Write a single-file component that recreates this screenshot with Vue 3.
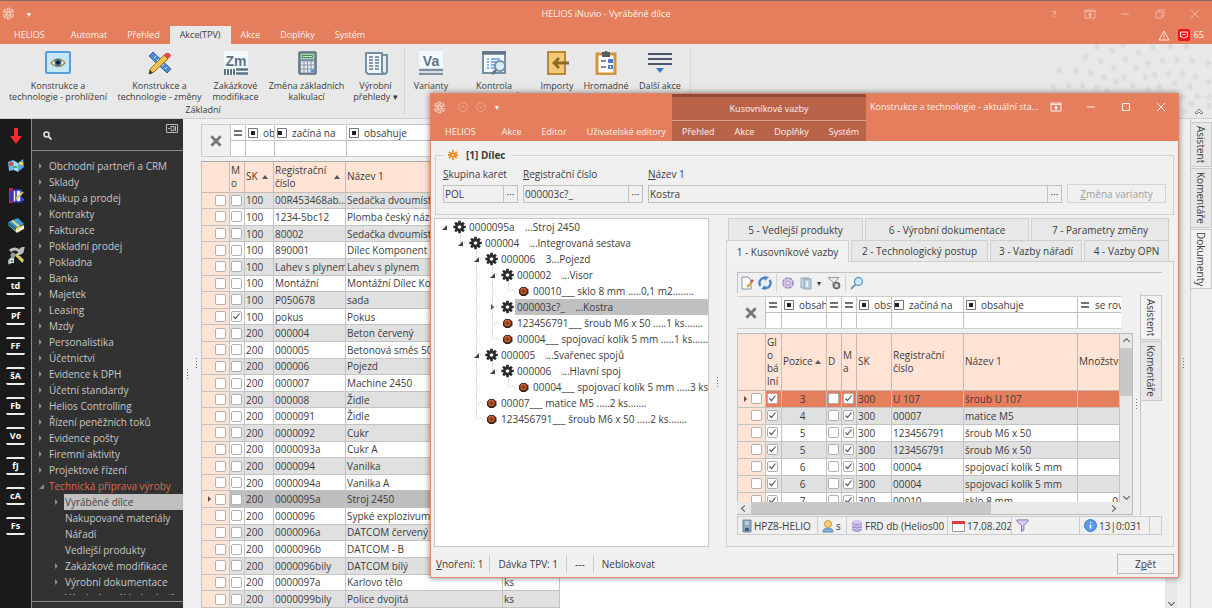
<script setup>
import { ref } from "vue";

const mainTabs = ["HELIOS", "Automat", "Přehled", "Akce(TPV)", "Akce", "Doplňky", "Systém"];

const basicActions = [
  { icon: "eye", label: "Konstrukce a\ntechnologie - prohlížení", size: "w108" },
  { icon: "pencil", label: "Konstrukce a\ntechnologie - změny", size: "w95" },
  { icon: "zm", letters: "Zm", label: "Zakázkové\nmodifikace", size: "w57" },
  { icon: "calc", label: "Změna základních\nkalkulací", size: "w85" },
  { icon: "papers", label: "Výrobní\npřehledy", size: "w53", menu: true },
];

const moreActions = [
  { icon: "va", letters: "Va", label: "Varianty", size: "w44" },
  { icon: "check", label: "Kontrola\nduplicit dílců", size: "w80" },
  { icon: "import", label: "Importy", size: "w46" },
  { icon: "clipboard", label: "Hromadné\nakce", size: "w52" },
  { icon: "more", label: "Další akce\n(TPV)", size: "w56" },
];

const flakes = [
  [866, 140], [914, 152], [946, 135], [991, 157], [1035, 143], [1087, 138], [1135, 138],
  [833, 170], [879, 184], [952, 178], [1021, 190], [1063, 181], [1107, 179], [1153, 182],
  [1200, 190], [754, 211], [803, 211], [848, 220], [917, 203], [985, 203], [1041, 225],
  [1083, 221], [1124, 221], [1163, 229], [887, 231], [949, 233], [1012, 233], [736, 260],
  [782, 257], [824, 256], [866, 262], [924, 246], [974, 257], [1055, 261], [1100, 250],
  [1146, 260], [1203, 245], [898, 272], [1020, 268], [1125, 290], [1168, 290], [1203, 290],
  [1128, 335], [1150, 312], [1203, 318],
];

const railPictures = ["r-arrow", "r-map", "r-book", "r-stack", "r-tools"];
const railCodes = ["td", "Pf", "FF", "šA", "Fb", "Vo", "fJ", "cA", "Fs"];

const menu = [
  "Obchodní partneři a CRM", "Sklady", "Nákup a prodej", "Kontrakty", "Fakturace",
  "Pokladní prodej", "Pokladna", "Banka", "Majetek", "Leasing", "Mzdy", "Personalistika",
  "Účetnictví", "Evidence k DPH", "Účetní standardy", "Helios Controlling",
  "Řízení peněžních toků", "Evidence pošty", "Firemní aktivity", "Projektové řízení",
];
const submenu = [
  { text: "Vyráběné dílce", more: true, active: true },
  { text: "Nakupované materiály" },
  { text: "Nářadí" },
  { text: "Vedlejší produkty" },
  { text: "Zakázkové modifikace", more: true },
  { text: "Výrobní dokumentace", more: true },
  { text: "Výrobní a nákladové stř." },
];

const partFilters = [
  { op: "eq", text: "" },
  { op: "contains", text: "obsahuje" },
  { op: "begins", text: "začíná na" },
  { op: "contains", text: "obsahuje" },
];

const parts = ref(
  [
    ["100", "00R453468ab...", "Sedačka dvoumístná"],
    ["100", "1234-5bc12", "Plomba český název"],
    ["100", "80002", "Sedačka dvoumístná"],
    ["100", "890001", "Dílec Komponent 1"],
    ["100", "Lahev s plynem", "Lahev s plynem"],
    ["100", "Montážní", "Montážní Dílec Komp"],
    ["100", "P050678", "sada"],
    ["100", "pokus", "Pokus"],
    ["200", "000004", "Beton červený"],
    ["200", "000005", "Betonová směs 50"],
    ["200", "000006", "Pojezd"],
    ["200", "000007", "Machine 2450"],
    ["200", "000008", "Židle"],
    ["200", "0000091", "Židle"],
    ["200", "0000092", "Cukr"],
    ["200", "0000093a", "Cukr A"],
    ["200", "0000094", "Vanilka"],
    ["200", "0000094a", "Vanilka A"],
    ["200", "0000095a", "Stroj 2450"],
    ["200", "0000096", "Sypké explozivum"],
    ["200", "0000096a", "DATCOM červený"],
    ["200", "0000096b", "DATCOM - B"],
    ["200", "0000096bily", "DATCOM bílý"],
    ["200", "0000097a", "Karlovo tělo", "ks"],
    ["200", "0000099bily", "Police dvojitá", "ks"],
  ].map(([sk, reg, name, unit]) => ({ sk, reg, name, unit, mark: false, mo: reg === "pokus" }))
);
const currentPart = "0000095a";

const tree = [
  { depth: 0, open: true, text: "0000095a    ...Stroj 2450" },
  { depth: 1, open: true, text: "000004    ...Integrovaná sestava" },
  { depth: 2, open: true, text: "000006    3...Pojezd" },
  { depth: 3, open: true, text: "000002    ...Visor" },
  { depth: 4, leaf: true, text: "00010___ sklo 8 mm .....0,1 m2........" },
  { depth: 3, open: false, text: "000003c?_    ...Kostra", selected: true },
  { depth: 3, leaf: true, text: "123456791___ šroub M6 x 50 .....1 ks......." },
  { depth: 3, leaf: true, text: "00004___ spojovací kolík 5 mm .....1 ks......" },
  { depth: 2, open: true, text: "000005    ...Svařenec spojů" },
  { depth: 3, open: true, text: "000006    ...Hlavní spoj" },
  { depth: 4, leaf: true, text: "00004___ spojovací kolík 5 mm .....3 ks...." },
  { depth: 2, leaf: true, text: "00007___ matice M5 .....2 ks......." },
  { depth: 2, leaf: true, text: "123456791___ šroub M6 x 50 .....2 ks......." },
];

// does another node follow on this level, under the same parent?
const continues = (index, level) => {
  for (let i = index + 1; i < tree.length; i++) {
    if (tree[i].depth < level) return false;
    if (tree[i].depth === level) return true;
  }
  return false;
};

const guideClass = (index, level) => {
  const own = level === tree[index].depth;
  return { elbow: own && level > 0, through: level > 0 && continues(index, level) };
};

const linkFilters = [
  { op: "eq", text: "" },
  { op: "contains", text: "obsahuje" },
  { op: "eq", text: "" },
  { op: "eq", text: "" },
  { op: "contains", text: "obsahuje" },
  { op: "begins", text: "začíná na" },
  { op: "contains", text: "obsahuje" },
  { op: "eq", text: "se rovná" },
];

const links = ref(
  [
    ["3", "U 107", "šroub U 107", ""],
    ["4", "00007", "matice M5", ""],
    ["5", "123456791", "šroub M6 x 50", ""],
    ["5", "123456791", "šroub M6 x 50", ""],
    ["6", "00004", "spojovací kolík 5 mm", ""],
    ["6", "00004", "spojovací kolík 5 mm", ""],
    ["7", "00010", "sklo 8 mm", "0"],
  ].map(([pos, reg, name, qty]) => ({ pos, reg, name, qty, mark: false, global: true, d: false, ma: true }))
);

const group = ref("POL");
const regNo = ref("000003c?_");
const partName = ref("Kostra");
</script>

<template>
  <div class="app">
    <svg class="defs" aria-hidden="true">
      <symbol id="flower" viewBox="0 0 16 16">
        <g fill="none" stroke="currentColor" stroke-width="1.2">
          <circle cx="8" cy="8" r="2" />
          <path d="M8 6 6 1.5h4zM8 10l-2 4.500h4zM6.300 7 1.500 6l2-3.500zM9.700 7l4.800-1-2-3.500zM6.300 9l-4.800 1 2 3.500zM9.700 9l4.800 1-2 3.500z" />
        </g>
      </symbol>
      <symbol id="ribbon-toggle" viewBox="0 0 12 10">
        <path d="M1 1h10v8H1zM1 2.500h10" fill="none" stroke="currentColor" />
        <path d="M6 3.500 8.500 6H7v2H5V6H3.500z" fill="currentColor" />
      </symbol>
      <symbol id="cross" viewBox="0 0 12 12">
        <path d="m2 2 8 8M10 2l-8 8" fill="none" stroke="currentColor" stroke-width="2.400" />
      </symbol>
      <symbol id="eq" viewBox="0 0 10 10"><path d="M1 3h8M1 7h8" stroke="#444" stroke-width="1.600" /></symbol>
      <symbol id="contains" viewBox="0 0 10 10">
        <path d="M.500.500h9v9h-9z" fill="#fff" stroke="#777" />
        <path d="M3 3h4v4H3z" fill="#222" />
      </symbol>
      <symbol id="begins" viewBox="0 0 10 10">
        <path d="M.500.500h9v9h-9z" fill="#fff" stroke="#777" />
        <path d="M1 3h4v4H1z" fill="#222" />
      </symbol>
      <symbol id="gear" viewBox="0 0 14 14">
        <path d="M7 .800v12.400M.800 7h12.400M2.600 2.600l8.800 8.800M11.400 2.600l-8.800 8.800" stroke="#2b2b2b" stroke-width="2.600" />
        <circle cx="7" cy="7" r="4.500" fill="#2b2b2b" /><circle cx="7" cy="7" r="1.800" fill="#fff" />
      </symbol>
      <symbol id="nut" viewBox="0 0 14 14">
        <path d="M5 3h4l3 2.500v4L9 12H5L2.500 9.500v-4z" fill="#3a2a22" />
        <circle cx="7" cy="7" r="3.300" fill="#c05a2a" /><circle cx="7" cy="7.300" r="1.200" fill="#6a3010" />
      </symbol>

      <symbol id="eye" viewBox="0 0 26 24">
        <rect x="1" y="1" width="24" height="21" rx="1" fill="#c3e7fb" stroke="#5b9bd8" stroke-width="2" />
        <path d="M6 12q7-8 14 0-7 7-14 0z" fill="#fff" stroke="#a98a45" stroke-width="1.400" />
        <circle cx="13" cy="11.500" r="3.500" fill="#2d6ca0" /><circle cx="13" cy="11.500" r="1.800" fill="#111" />
      </symbol>
      <symbol id="pencil" viewBox="0 0 26 24">
        <path d="m2 5 4-4 18 17-4 4z" fill="#4d8bd6" stroke="#3467a6" />
        <path d="m7 7 2-2M10 10l2-2M15 15l2-2M18 18l2-2" stroke="#d3e6fa" />
        <path d="m2 23 1-5L17 4l4 4L7 21z" fill="#f2c34a" stroke="#94702a" />
        <path d="m2 23 1-4 3 3z" fill="#333" /><path d="m17 4 2-2q2-1 4 1t0 3l-2 2z" fill="#e2464d" />
      </symbol>
      <symbol id="zm" viewBox="0 0 26 24">
        <path d="M1 0h24v24H1z" fill="#f3faff" />
        <path d="M2 18v6M5 18v6M8 18v6M11 18v6" stroke="#5d7284" stroke-width="2" />
        <path d="M13 18.500h12M13 22.500h12" stroke="#5d7284" stroke-width="2.600" />
      </symbol>
      <symbol id="va" viewBox="0 0 26 24">
        <path d="M1 0h24v24H1z" fill="#f3faff" />
        <path d="M1 19h24M1 23h24" stroke="#7c909f" stroke-width="2.400" />
      </symbol>
      <symbol id="calc" viewBox="0 0 26 24">
        <rect x="5" y="1" width="17" height="22" rx="1" fill="#8294a5" stroke="#5b6d7c" stroke-width="1.500" />
        <path d="M7 3h13v5H7z" fill="#a9d6ae" />
        <path d="M8.500 4.500h10v2h-10z" fill="#cdebd0" stroke="#3f8d50" />
        <path d="M7 12h13M7 16h13M7 20h13" stroke="#e3eaf2" stroke-width="3" stroke-dasharray="2.500 1" />
        <path d="M17 20h3" stroke="#5b8fd0" stroke-width="3" />
      </symbol>
      <symbol id="papers" viewBox="0 0 26 24">
        <path d="M18 4h6v17l-2 2h-4" fill="#e5eef5" stroke="#7690a3" stroke-width="2" />
        <path d="M3 2h16v19l2 2H5l-2-2z" fill="#f2f7fb" stroke="#7690a3" stroke-width="2" />
        <path d="M6 6h4M12 6h4M6 9h4M12 9h4M6 12h4M12 12h4M6 15h4M12 15h4M6 18h4M12 18h4" stroke="#5f7b90" stroke-width="1.500" />
      </symbol>
      <symbol id="check" viewBox="0 0 26 24">
        <path d="M2 1h22v21H2z" fill="#f6fbff" stroke="#7690a3" stroke-width="2" />
        <path d="M1 2h24" stroke="#617789" stroke-width="3.500" />
        <path d="M6 8h2M10 8h9M6 11h2M10 11h6M6 14h2M10 14h4M6 17h2M10 17h4" stroke="#5c9be0" stroke-width="1.400" />
        <circle cx="19" cy="15" r="5" fill="#d9effc" stroke="#7690a3" stroke-width="2" />
        <path d="m15 19-4 4" stroke="#617789" stroke-width="2.600" />
      </symbol>
      <symbol id="import" viewBox="0 0 26 24">
        <path d="M4 1h17v22H4z" fill="#f5c878" stroke="#b78935" stroke-width="2" />
        <path d="M10 12h15M15 7l-5 5 5 5" fill="none" stroke="#8b6a25" stroke-width="2.800" />
      </symbol>
      <symbol id="clipboard" viewBox="0 0 26 24">
        <path d="M4 3h18v20H4z" fill="#fff" stroke="#d0973f" stroke-width="3" />
        <path d="M9 1h2q2-2 4 0h2v5H9z" fill="#4c6072" />
        <path d="M8 10h5M8 16h5" stroke="#667" stroke-width="1.500" /><path d="M15 8h5v4h-5zM15 14h5v4h-5z" fill="#4a7ccc" />
        <path d="M17 15h1v2h-1z" fill="#fff" />
      </symbol>
      <symbol id="more" viewBox="0 0 26 24">
        <path d="M1 3h24M1 8h24M1 13h24" stroke="#4b5568" stroke-width="2" />
        <path d="M9 17h8l-4 5z" fill="#3d78c8" />
      </symbol>

      <symbol id="r-arrow" viewBox="0 0 18 18"><path d="M7 1h4v8h4l-6 8-6-8h4z" fill="#f52a2a" /></symbol>
      <symbol id="r-map" viewBox="0 0 18 18">
        <path d="m1 5 5-2 1 10-5 1z" fill="#6ab7f0" /><path d="m6 3 5 3v9l-4-2z" fill="#a6dcf8" />
        <path d="m11 6 5-4 1 8-6 5z" fill="#5aa4e8" /><circle cx="4" cy="7" r="2" fill="#e6412f" />
        <path d="M12 5h4v3h-4z" fill="#f0d638" /><path d="M7 9h3v2H7z" fill="#4bb04a" />
      </symbol>
      <symbol id="r-book" viewBox="0 0 18 18">
        <path d="M2 1h4v15H2z" fill="#c4263a" /><path d="M6 3h8v12H6z" fill="#f4f4ff" stroke="#2a32c8" stroke-width="1.500" />
        <path d="M9 3v12M4 4v10" stroke="#2531d8" stroke-width="1.500" /><path d="m9 12 7-7" stroke="#e2c63c" stroke-width="2" />
        <path d="M14 11h3v3h-3z" fill="#2a4de0" />
      </symbol>
      <symbol id="r-stack" viewBox="0 0 18 18">
        <path d="m1 7 9 9 7-4V8l-9 3z" fill="#e8d55a" /><path d="m2 8 8 6 7-4" fill="none" stroke="#fff" stroke-width="1.500" />
        <path d="m1 5 10-4 6 6-8 4z" fill="#3f9ad6" /><path d="m1 5 8 6v3L1 8z" fill="#26738f" />
        <path d="m5 3.500 7 6" stroke="#f2dd62" stroke-width="2" />
      </symbol>
      <symbol id="r-tools" viewBox="0 0 18 18">
        <path d="M3 4q5-4 9 0l4-3-1 4-5 3 6 6M3 17q-2-5 4-6" fill="none" stroke="#bcbcbc" stroke-width="3" />
        <path d="m9 8 7 7" stroke="#e7cc38" stroke-width="2" /><circle cx="6" cy="8" r="2.500" fill="#8f98a8" />
        <path d="M3 12h4v4H3z" fill="#dfe4ea" /><path d="M4 13h2v2H4z" fill="#38a04c" />
      </symbol>
      <symbol id="lens" viewBox="0 0 14 14">
        <path d="m6 8-5 5" stroke="#8594a3" stroke-width="2" />
        <circle cx="8.500" cy="5.500" r="4" fill="#c9ecfb" stroke="#6d9fc9" stroke-width="1.400" />
      </symbol>
      <symbol id="funnel" viewBox="0 0 14 14">
        <path d="M1 1h12v1.500L8.500 7v5L6 13.500V7L1 2.500z" fill="#dacdf0" stroke="#8468b5" />
      </symbol>
    </svg>

    <header class="titlebar">
      <div class="title-row">
        <div class="quick">
          <svg class="logo"><use href="#flower" /></svg>
          <span class="caret">▾</span>
        </div>
        <h1>HELIOS iNuvio - Vyráběné dílce</h1>
        <div class="window-buttons dim">
          <button aria-label="Nápověda"><b>?</b></button>
          <button aria-label="Pás karet"><svg width="12" height="10"><use href="#ribbon-toggle" /></svg></button>
          <button aria-label="Minimalizovat"><svg width="10" height="10"><path d="M1 5h8" stroke="currentColor" /></svg></button>
          <button aria-label="Obnovit">
            <svg width="10" height="10"><path d="M1 3h6v6H1zM3 3V1h6v6H7" fill="none" stroke="currentColor" /></svg>
          </button>
          <button aria-label="Zavřít"><svg width="10" height="10"><path d="m1 1 8 8M9 1 1 9" stroke="currentColor" /></svg></button>
        </div>
      </div>
      <nav class="tab-row">
        <button v-for="tab in mainTabs" :key="tab" :class="{ active: tab === 'Akce(TPV)' }">{{ tab }}</button>
        <div class="alerts">
          <svg width="12" height="11" viewBox="0 0 12 11">
            <path d="M6 1 11 10H1z" fill="none" stroke="#fbe4da" /><path d="M6 4v3M6 8v1" stroke="#fbe4da" />
          </svg>
          <svg width="12" height="12" viewBox="0 0 12 12">
            <rect width="12" height="12" rx="2" fill="#f80d12" />
            <path d="M2.500 3h7v5h-2L6 9.500 4.500 8h-2z" fill="none" stroke="#fff" /><path d="M4.500 5.500h3" stroke="#fff" />
          </svg>
          <span>65</span>
        </div>
      </nav>
    </header>

    <section class="ribbon">
      <div class="ribbon-group first">
        <div class="actions">
          <button v-for="a in basicActions" :key="a.label" :class="['action', a.size]">
            <svg class="big">
              <use :href="'#' + a.icon" />
              <text v-if="a.letters" x="13" y="15" text-anchor="middle">{{ a.letters }}</text>
            </svg>
            <span>{{ a.label }}<i v-if="a.menu"> ▾</i></span>
          </button>
        </div>
        <div class="group-name">Základní</div>
      </div>
      <div class="ribbon-group">
        <div class="actions">
          <button v-for="a in moreActions" :key="a.label" :class="['action', a.size]">
            <svg class="big">
              <use :href="'#' + a.icon" />
              <text v-if="a.letters" x="13" y="15" text-anchor="middle">{{ a.letters }}</text>
            </svg>
            <span>{{ a.label }}</span>
          </button>
        </div>
      </div>
      <svg class="flakes" viewBox="720 132 492 228">
        <path
          v-for="([x, y], i) in flakes"
          :key="i"
          :d="`M${x - 10} ${y}h20M${x - 5} ${y - 10}l10 20M${x + 5} ${y - 10}l-10 20`"
          stroke="#dadada"
          stroke-width="4"
        />
      </svg>
      <svg class="collapse" viewBox="0 0 10 8">
        <path d="M1 6 5 2l4 4M3 7l2-2 2 2M1 6l2 1M9 6 7 7" fill="none" stroke="#777" />
      </svg>
    </section>

    <div class="body">
      <aside class="rail">
        <button v-for="p in railPictures" :key="p" :aria-label="p">
          <svg width="18" height="18"><use :href="'#' + p" /></svg>
        </button>
        <button v-for="c in railCodes" :key="c"><span class="code">{{ c }}</span></button>
      </aside>

      <aside class="sidebar">
        <div class="search">
          <svg width="9" height="9" viewBox="0 0 9 9">
            <circle cx="3.500" cy="3.500" r="2.500" fill="none" stroke="#ddd" stroke-width="1.600" />
            <path d="m5.500 5.500 3 3" stroke="#ddd" stroke-width="1.800" />
          </svg>
          <svg class="pin" width="12" height="9" viewBox="0 0 12 9">
            <path d="M.500.500h11v8H.500z" fill="none" stroke="#bbb" /><path d="M5 2.500h3v4H5zM2 4.500h2M9.500 2v5" fill="none" stroke="#bbb" />
          </svg>
        </div>
        <ul class="menu">
          <li v-for="m in menu" :key="m"><i class="tri"></i><a href="#">{{ m }}</a></li>
          <li class="opened"><i class="tri open"></i><a href="#">Technická příprava výroby</a></li>
          <li v-for="s in submenu" :key="s.text" :class="['sub', { active: s.active }]">
            <i :class="s.more ? 'tri' : 'no-tri'"></i><a href="#">{{ s.text }}</a>
          </li>
        </ul>
        <div class="sidebar-foot"></div>
      </aside>

      <div class="gutter low"><i class="dots"></i></div>
      <div class="gutter"><i class="dots"></i></div>

      <main class="parts">
        <div class="filters parts-cols">
          <button class="clear" aria-label="Zrušit filtr"><svg width="14" height="14"><use href="#cross" /></svg></button>
          <div v-for="(f, i) in partFilters" :key="i" class="filter">
            <button><svg width="10" height="10"><use :href="'#' + f.op" /></svg><span>{{ f.text }}</span></button>
            <input type="text" :aria-label="'Filtr ' + (i + 1)" />
          </div>
        </div>
        <div class="sheet">
          <table class="grid parts-grid">
            <colgroup><col class="c28" /><col class="c15" /><col class="c29" /><col class="c72" /><col class="c157" /><col class="c57" /></colgroup>
            <thead>
              <tr>
                <th></th>
                <th>{{ "M\no" }}</th>
                <th><div class="sorted">SK<i class="up"></i></div></th>
                <th><div class="sorted">{{ "Registrační\nčíslo" }}<i class="up"></i></div></th>
                <th>Název 1</th>
                <th></th>
              </tr>
            </thead>
            <tbody>
              <tr v-for="p in parts" :key="p.reg" :class="{ current: p.reg === currentPart }">
                <td class="mark"><div><i class="tri"></i><input v-model="p.mark" type="checkbox" aria-label="Označit" /></div></td>
                <td class="tick"><input v-model="p.mo" type="checkbox" aria-label="Mo" /></td>
                <td>{{ p.sk }}</td>
                <td>{{ p.reg }}</td>
                <td>{{ p.name }}</td>
                <td>{{ p.unit }}</td>
              </tr>
            </tbody>
          </table>
          <div class="vbar"><span class="down"></span></div>
        </div>
      </main>

      <div class="gutter right"><i class="dots"></i></div>
      <nav class="side-tabs">
        <button class="h45">Asistent</button>
        <button class="h60">Komentáře</button>
        <button class="h60 active">Dokumenty</button>
      </nav>
    </div>

    <section class="dialog">
      <header class="dialog-head">
        <div class="head-left">
          <div class="quick">
            <svg class="logo"><use href="#flower" /></svg>
            <svg class="faint" width="30" height="12">
              <circle cx="5" cy="6" r="4.500" fill="none" stroke="#eda88f" /><path d="m3 7 2-2 2 2" fill="none" stroke="#eda88f" />
              <circle cx="23" cy="6" r="4.500" fill="none" stroke="#eda88f" /><path d="m21 5 2 2 2-2" fill="none" stroke="#eda88f" />
            </svg>
            <span class="caret">▾</span>
          </div>
          <nav class="tab-row">
            <button>HELIOS</button><button>Akce</button><button>Editor</button><button>Uživatelské editory</button>
          </nav>
        </div>
        <div class="context">
          <div class="context-name">Kusovníkové vazby</div>
          <nav class="tab-row">
            <button>Přehled</button><button>Akce</button><button>Doplňky</button><button>Systém</button>
          </nav>
        </div>
        <div class="head-right">
          <h2>Konstrukce a technologie - aktuální sta...</h2>
          <div class="window-buttons">
            <button aria-label="Pás karet"><svg width="12" height="10"><use href="#ribbon-toggle" /></svg></button>
            <button aria-label="Minimalizovat"><svg width="10" height="10"><path d="M1 5h8" stroke="currentColor" /></svg></button>
            <button aria-label="Maximalizovat"><svg width="10" height="10"><path d="M1.500 1.500h7v7h-7z" fill="none" stroke="currentColor" /></svg></button>
            <button aria-label="Zavřít"><svg width="10" height="10"><path d="m1 1 8 8M9 1 1 9" stroke="currentColor" /></svg></button>
          </div>
        </div>
      </header>

      <fieldset class="part">
        <legend>
          <svg width="10" height="10" viewBox="0 0 10 10">
            <path d="M5 0v10M1 2l8 6M9 2 1 8M0 5h10" stroke="#f28c1e" stroke-width="1.800" /><circle cx="5" cy="5" r="1" fill="#fff" />
          </svg>
          [1] Dílec
        </legend>
        <div class="fields">
          <div class="field w75">
            <label for="group"><u>S</u>kupina karet</label>
            <div class="lookup"><input id="group" v-model="group" type="text" /><button aria-label="Vybrat skupinu">···</button></div>
          </div>
          <div class="field w120">
            <label for="reg"><u>R</u>egistrační číslo</label>
            <div class="lookup"><input id="reg" v-model="regNo" type="text" /><button aria-label="Vybrat číslo">···</button></div>
          </div>
          <div class="field grow">
            <label for="name"><u>N</u>ázev 1</label>
            <div class="lookup"><input id="name" v-model="partName" type="text" /><button aria-label="Vybrat název">···</button></div>
          </div>
          <button class="variant" disabled><u>Z</u>měna varianty</button>
        </div>
      </fieldset>

      <div class="panes">
        <div class="tree">
          <div v-for="(n, i) in tree" :key="i" class="node">
            <span v-for="level in n.depth + 1" :key="level" :class="['guide', guideClass(i, level - 1)]">
              <i v-if="level === n.depth + 1 && !n.leaf" :class="['tri', { open: n.open }]"></i>
            </span>
            <svg width="15" height="14"><use :href="n.leaf ? '#nut' : '#gear'" /></svg>
            <span :class="['node-text', { selected: n.selected }]">{{ n.text }}</span>
          </div>
        </div>
        <div class="gutter split"><i class="dots"></i></div>

        <div class="tabs">
          <div class="tab-line">
            <button class="t135">5 - Vedlejší produkty</button>
            <button class="t164">6 - Výrobní dokumentace</button>
            <button class="grow">7 - Parametry změny</button>
          </div>
          <div class="tab-line">
            <button class="t123 active">1 - Kusovníkové vazby</button>
            <button class="t137">2 - Technologický postup</button>
            <button class="t92">3 - Vazby nářadí</button>
            <button class="grow">4 - Vazby OPN</button>
          </div>
          <div class="tab-page">
            <div class="toolbar">
              <button aria-label="Upravit">
                <svg width="14" height="14">
                  <path d="M2 1h6l3 3v9H2z" fill="#fff" stroke="#7b93a8" /><path d="m7 11 5-5" stroke="#dca545" stroke-width="2.400" /><path d="m11 6 2-2" stroke="#d8444a" stroke-width="2.400" />
                </svg>
              </button>
              <button aria-label="Obnovit">
                <svg width="14" height="14">
                  <path d="M2.500 10A5 5 0 0 1 7 2M11.500 4A5 5 0 0 1 7 12" fill="none" stroke="#4a86cc" stroke-width="2.400" /><path d="M6 0l5 1-4 4zM8 14l-5-1 4-4z" fill="#4a86cc" />
                </svg>
              </button>
              <i class="sep"></i>
              <button aria-label="Nastavení">
                <svg width="14" height="14">
                  <circle cx="7" cy="7" r="5" fill="#d9caec" stroke="#a189c6" stroke-width="1.600" stroke-dasharray="3 1" /><circle cx="7" cy="7" r="2" fill="#f4eefb" stroke="#a189c6" />
                </svg>
              </button>
              <button aria-label="Kopie">
                <svg width="14" height="14">
                  <path d="M2 2h8v10H2z" fill="#c8dcea" stroke="#8fa6b8" /><path d="M5 3h7v10H5z" fill="#b5cfe1" stroke="#8fa6b8" /><path d="M8 5v6" stroke="#e9f3fa" stroke-width="2" />
                </svg>
              </button>
              <span class="caret">▾</span>
              <button aria-label="Filtr">
                <svg width="14" height="14">
                  <path d="M1 1.500h11L8 6v6l-2-2V6z" fill="#eee" stroke="#999" /><circle cx="9.500" cy="9.500" r="3" fill="#bbb" stroke="#666" stroke-width="1.600" /><circle cx="9.500" cy="9.500" r="1" fill="#fff" />
                </svg>
              </button>
              <i class="sep"></i>
              <button aria-label="Hledat"><svg width="14" height="14"><use href="#lens" /></svg></button>
            </div>

            <div class="link-area">
              <div class="link-left">
                <div class="filters link-cols">
                  <button class="clear" aria-label="Zrušit filtr"><svg width="14" height="14"><use href="#cross" /></svg></button>
                  <div v-for="(f, i) in linkFilters" :key="i" class="filter">
                    <button><svg width="10" height="10"><use :href="'#' + f.op" /></svg><span>{{ f.text }}</span></button>
                    <input type="text" :aria-label="'Filtr vazeb ' + (i + 1)" />
                  </div>
                </div>
                <div class="link-box">
                  <div class="link-scroll">
                    <div class="link-clip">
                      <table class="grid link-grid">
                        <colgroup>
                          <col class="c28" /><col class="c16" /><col class="c45" /><col class="c15" /><col class="c15" /><col class="c35" /><col class="c72" /><col class="c114" /><col />
                        </colgroup>
                        <thead>
                          <tr>
                            <th></th>
                            <th>{{ "Gl\no\nbá\nlní" }}</th>
                            <th><div class="sorted">Pozice<i class="up"></i></div></th>
                            <th>D</th>
                            <th>{{ "M\na" }}</th>
                            <th>SK</th>
                            <th>{{ "Registrační\nčíslo" }}</th>
                            <th>Název 1</th>
                            <th>Množství</th>
                          </tr>
                        </thead>
                        <tbody>
                          <tr v-for="(l, i) in links" :key="i" :class="{ picked: i === 0 }">
                            <td class="mark"><div><i class="tri"></i><input v-model="l.mark" type="checkbox" aria-label="Označit" /></div></td>
                            <td class="tick"><input v-model="l.global" type="checkbox" aria-label="Globální" /></td>
                            <td class="pos">{{ l.pos }}</td>
                            <td class="tick"><input v-model="l.d" type="checkbox" aria-label="D" /></td>
                            <td class="tick"><input v-model="l.ma" type="checkbox" aria-label="Ma" /></td>
                            <td>300</td>
                            <td>{{ l.reg }}</td>
                            <td>{{ l.name }}</td>
                            <td class="qty">{{ l.qty }}</td>
                          </tr>
                        </tbody>
                      </table>
                    </div>
                    <div class="vbar"><span class="up-arrow"></span><i class="thumb"></i><span class="down"></span></div>
                  </div>
                  <div class="hbar"><span class="left"></span><i class="thumb"></i><span class="right-arrow"></span></div>
                </div>
              </div>
              <div class="gutter narrow"><i class="dots"></i></div>
              <nav class="side-tabs inner">
                <button class="h45 active">Asistent</button>
                <button class="h60">Komentáře</button>
              </nav>
            </div>

            <div class="status">
              <span class="s80">
                <svg width="10" height="14"><path d="M1 1h8v12H1z" fill="#8fa9c0" stroke="#6c8499" /><path d="M3 3h4M3 5h4" stroke="#eef" /><path d="M3 9h4v3H3z" fill="#3c5c7c" /></svg>HPZ8-HELIO
              </span>
              <span class="s29">
                <svg width="12" height="14"><path d="M1 13q0-4 5-4t5 4z" fill="#7fb0de" stroke="#5e8ab5" /><circle cx="6" cy="5" r="3.500" fill="#f6d27a" stroke="#c79a3c" /></svg>s
              </span>
              <span class="s101">
                <svg width="12" height="14"><path d="M1 3v8q5 4 10 0V3z" fill="#a893cc" /><ellipse cx="6" cy="3" rx="5" ry="2" fill="#d5c8ea" /><path d="M1 6q5 3 10 0M1 9q5 3 10 0" fill="none" stroke="#e2d8f2" /></svg>FRD db (Helios00
              </span>
              <span class="s64">
                <svg width="13" height="12"><path d="M.500 1.500h12v10H.500z" fill="#fff" stroke="#999" /><path d="M0 1h13v3H0z" fill="#e0393c" /></svg>17.08.202
              </span>
              <span class="grow"><svg width="13" height="13"><use href="#funnel" /></svg></span>
              <span class="s70">
                <svg width="13" height="13"><circle cx="6.500" cy="6.500" r="6" fill="#5b9be6" stroke="#3f7ccb" /><path d="M6.500 3v1M6.500 5.500v4" stroke="#fff" stroke-width="1.600" /></svg>13|0:031
              </span>
              <span class="s11"></span>
            </div>
          </div>
        </div>
      </div>

      <footer class="dialog-foot">
        <span><u>V</u>noření: 1</span>
        <span>Dávka TPV: 1</span>
        <span>---</span>
        <span>Neblokovat</span>
        <button>Z<u>p</u>ět</button>
      </footer>
    </section>
  </div>
</template>

<style>
body {
  margin: 0;
  overflow: hidden;
}
</style>

<style scoped>
.app {
  position: relative;
  display: flex;
  flex-direction: column;
  height: 100vh;
  background: #f0f0f0;
  color: #3c3c3c;
  font: 10px/14px "Open Sans", "Noto Sans", sans-serif;
}

.app *,
.app *::before,
.app *::after {
  box-sizing: border-box;
}

.defs {
  position: absolute;
  width: 0;
  height: 0;
}

button,
input {
  margin: 0;
  padding: 0;
  border: 0;
  background: none;
  color: inherit;
  font: inherit;
}

svg {
  flex: none;
}

h1,
h2 {
  margin: 0;
  font-size: 9px;
  font-weight: 400;
}

i {
  font-style: normal;
}

.grow {
  flex: 1;
}

/* title bar and ribbon tabs */
.titlebar {
  height: 44px;
  border-top: 1px solid #84695e;
  background: #e47e5c;
  color: #fdf1ec;
  font-size: 9px;
}

.title-row {
  display: grid;
  grid-template-columns: 1fr auto 1fr;
  align-items: center;
  height: 25px;
}

.quick {
  display: flex;
  align-items: center;
  gap: 12px;
  padding-left: 2px;
}

.logo {
  width: 13px;
  height: 13px;
  color: #f9d5c8;
}

.caret {
  width: 8px;
  font-size: 8px;
}

.window-buttons {
  display: flex;
  flex: none;
  justify-content: flex-end;
}

.window-buttons button {
  display: flex;
  align-items: center;
  justify-content: center;
  width: 35px;
  height: 25px;
}

.dim {
  color: #efb8a4;
}

.tab-row {
  display: flex;
  height: 18px;
}

.tab-row button {
  padding: 0 10px;
  white-space: nowrap;
}

.tab-row button:first-child {
  padding: 0 16px 0 14px;
}

.tab-row button.active {
  background: #e8e8e8;
  color: #3c3c3c;
}

.alerts {
  display: flex;
  flex: 1;
  align-items: center;
  justify-content: flex-end;
  gap: 4px;
  padding-right: 8px;
}

.alerts svg:first-child {
  margin-right: 4px;
}

.ribbon {
  position: relative;
  display: flex;
  flex: none;
  height: 75px;
  border-bottom: 1px solid #cfcfcf;
  background: #e8e8e8;
  font-size: 9px;
}

.ribbon-group {
  display: flex;
  flex-direction: column;
  align-items: flex-start;
  margin: 4px 0;
  padding: 3px 2px 0 3px;
  border-right: 1px solid #d5d5d5;
}

.ribbon-group.first {
  padding-left: 4px;
}

.actions {
  display: flex;
  flex: 1;
}

.action {
  display: flex;
  flex-direction: column;
  align-items: center;
  gap: 5px;
  line-height: 11px;
  white-space: pre;
}

.big {
  width: 26px;
  height: 24px;
  fill: #5d7284;
  font: 700 14px "Liberation Sans", sans-serif;
}

.w108 {
  width: 108px;
}

.w95 {
  width: 95px;
}

.w57 {
  width: 57px;
}

.w85 {
  width: 85px;
}

.w53 {
  width: 53px;
}

.w44 {
  width: 46px;
}

.w80 {
  width: 80px;
}

.w46 {
  width: 46px;
}

.w52 {
  width: 52px;
}

.w56 {
  width: 56px;
}

.group-name {
  align-self: center;
  line-height: 8px;
}

.flakes {
  position: absolute;
  top: 0;
  right: 0;
  width: 164px;
  height: 76px;
}

.collapse {
  position: absolute;
  right: 8px;
  bottom: 3px;
  width: 10px;
  height: 8px;
}

.body {
  display: flex;
  flex: 1;
  min-height: 0;
}

/* left rail and menu */
.rail {
  display: flex;
  flex-direction: column;
  gap: 12px;
  width: 31px;
  padding-top: 8px;
  background: #1a1a1a;
}

.rail button {
  display: flex;
  align-items: center;
  justify-content: center;
  height: 18px;
  flex: none;
}

.code {
  width: 19px;
  height: 18px;
  border: solid #eee;
  border-width: 2px 0;
  border-radius: 2px;
  color: #fff;
  font-size: 9px;
  font-weight: 700;
  line-height: 14px;
}

.sidebar {
  display: flex;
  flex-direction: column;
  width: 152px;
  border-left: 1px solid #8a8a8a;
  background: #323232;
  color: #c8c8c8;
}

.search {
  display: flex;
  flex: none;
  justify-content: space-between;
  height: 32px;
  padding: 12px 5px 0 11px;
  border-bottom: 1px solid #8a8a8a;
}

.pin {
  margin-top: -7px;
}

.menu {
  flex: 1;
  margin: 0;
  padding: 7px 0 0;
  overflow: hidden;
  list-style: none;
}

.menu li {
  display: flex;
  align-items: center;
  height: 16px;
  padding-left: 7px;
  white-space: nowrap;
}

.menu a {
  flex: 1;
  padding-left: 1px;
  color: inherit;
  line-height: 16px;
  text-decoration: none;
}

.menu .tri {
  margin-right: 6px;
  border-left-color: #888;
}

.menu .no-tri {
  width: 9px;
}

.menu li.sub {
  padding-left: 23px;
}

.menu .opened {
  color: #d9694a;
}

.menu .active a {
  background: #c0c0c0;
  color: #444;
}

.sidebar-foot {
  height: 13px;
  border-top: 6px solid #323232;
  box-shadow: inset 0 1px #8a8a8a;
}

.tri {
  width: 3px;
  height: 6px;
  border: solid transparent;
  border-width: 3px 0 3px 3px;
  border-left-color: #555;
}

.tri.open {
  width: 5px;
  height: 5px;
  border-width: 0 0 5px 5px;
  border-color: transparent transparent #444;
}

.menu .tri.open {
  margin-right: 4px;
  border-color: transparent transparent #888;
}

.gutter {
  display: flex;
  flex: none;
  align-items: center;
  justify-content: center;
  width: 9px;
}

.gutter.low {
  padding-top: 22px;
}

.gutter.right {
  width: 13px;
}

.gutter.split {
  width: 17px;
}

.gutter.narrow {
  width: 8px;
  border-right: 1px solid #c8c8c8;
}

.dots {
  width: 1px;
  height: 11px;
  background: repeating-linear-gradient(#777 0 1px, transparent 1px 3px);
}

/* data grids */
.parts {
  display: flex;
  flex: 1;
  flex-direction: column;
  gap: 4px;
  min-width: 0;
  padding-top: 5px;
}

.filters {
  display: grid;
  flex: none;
  height: 33px;
  border: 1px solid #ccc;
  overflow: hidden;
}

.parts-cols {
  grid-template-columns: 28px 15px 29px 72px 157px 1fr;
}

.link-cols {
  grid-template-columns: 28px 16px 45px 15px 15px 35px 72px 114px 1fr;
}

.clear {
  color: #777;
}

.clear svg {
  display: block;
  margin: auto;
}

.filter {
  display: flex;
  flex-direction: column;
  min-width: 0;
  border-left: 1px solid #c3c3c3;
  background: #fff;
}

.filter button {
  display: flex;
  align-items: center;
  gap: 5px;
  height: 15px;
  padding-left: 2px;
  overflow: hidden;
  white-space: nowrap;
}

.filter input {
  width: 100%;
  height: 16px;
  border-top: 1px solid #c3c3c3;
}

.sheet {
  display: flex;
  flex: 1;
  justify-content: space-between;
  min-height: 0;
  border-top: 1px solid #aaa;
  background: #fff;
}

.grid {
  border-collapse: collapse;
  table-layout: fixed;
  line-height: 12px;
}

.parts-grid {
  width: 358px;
  height: 100%;
}

.grid th {
  padding: 0 1px;
  border: 1px solid #c8b8b0;
  border-top: 0;
  background: #ffe3d5;
  font-weight: 400;
  line-height: 13px;
  text-align: left;
  white-space: pre;
  overflow: hidden;
}

.parts-grid th {
  height: 30px;
}

.grid td {
  padding: 0 1px;
  border: 1px solid #c3c3c3;
  white-space: nowrap;
  overflow: hidden;
}

.grid tbody tr {
  background: #fff;
}

.parts-grid tbody tr:nth-child(odd),
.link-grid tbody tr:nth-child(even) {
  background: #e0e0e0;
}

.parts-grid tbody tr.current {
  background: #bdbdbd;
}

.link-grid tbody tr.picked {
  background: #e47e5c;
}

.grid td.mark {
  background: #ffe3d5;
}

.mark div {
  display: flex;
  align-items: center;
  justify-content: space-between;
  padding: 0 2px 0 5px;
}

.mark .tri {
  visibility: hidden;
}

.current .mark .tri,
.picked .mark .tri {
  visibility: visible;
}

.grid td.pos {
  padding-right: 4px;
  text-align: center;
}

.grid td.qty {
  text-align: right;
}

.sorted {
  display: flex;
  align-items: center;
  justify-content: space-between;
  padding-right: 4px;
}

.up {
  border: solid transparent;
  border-width: 0 3px 4px;
  border-bottom-color: #555;
}

input[type="checkbox"] {
  display: block;
  flex: none;
  width: 11px;
  height: 11px;
  border: 1px solid #b0b0b0;
  border-radius: 2px;
  appearance: none;
  background: #fff;
}

input[type="checkbox"]:checked {
  background: #fff url("data:image/svg+xml,%3Csvg xmlns='http://www.w3.org/2000/svg' viewBox='0 0 9 9'%3E%3Cpath d='M1.500 4.500l2 2 4-5' fill='none' stroke='%23555' stroke-width='1.200'/%3E%3C/svg%3E");
}

.c15 {
  width: 15px;
}

.c16 {
  width: 16px;
}

.c28 {
  width: 28px;
}

.c29 {
  width: 29px;
}

.c35 {
  width: 35px;
}

.c45 {
  width: 45px;
}

.c57 {
  width: 57px;
}

.c72 {
  width: 72px;
}

.c114 {
  width: 114px;
}

.c157 {
  width: 157px;
}

.vbar {
  display: flex;
  flex: none;
  flex-direction: column;
  align-items: center;
  width: 12px;
  padding: 5px 0 3px;
  background: #e8e8e8;
}

.vbar .thumb {
  width: 12px;
  height: 48px;
  margin-top: 4px;
  background: #c8c8c8;
}

.vbar span,
.hbar span {
  width: 5px;
  height: 5px;
  border: solid #555;
  border-width: 1px 0 0 1px;
}

.up-arrow {
  transform: rotate(45deg);
}

.down {
  margin-top: auto;
  transform: rotate(225deg);
}

.hbar {
  display: flex;
  flex: none;
  align-items: center;
  height: 12px;
  padding: 0 17px 0 5px;
  background: #e8e8e8;
}

.hbar .thumb {
  width: 240px;
  height: 12px;
  margin-left: 4px;
  background: #c8c8c8;
}

.left {
  transform: rotate(-45deg);
}

.right-arrow {
  margin-left: auto;
  transform: rotate(135deg);
}

.side-tabs {
  display: flex;
  flex: none;
  flex-direction: column;
  gap: 1px;
  width: 22px;
  padding-top: 3px;
  border-left: 1px solid #c8c8c8;
}

.side-tabs button {
  border: 1px solid #c8c8c8;
  border-left: 0;
  background: #e6e6e6;
  writing-mode: vertical-rl;
}

.side-tabs .active {
  background: #f2f2f2;
}

.side-tabs.inner {
  width: 21px;
  padding-top: 2px;
  border-left: 0;
}

.h45 {
  height: 45px;
}

.h60 {
  height: 60px;
}

/* dialog window over the main screen */
.dialog {
  position: absolute;
  top: 93px;
  right: 33px;
  bottom: 30px;
  left: 430px;
  display: flex;
  flex-direction: column;
  border: 1px solid #e08a6d;
  background: #f0f0f0;
  box-shadow: 0 0 6px rgba(0, 0, 0, 0.5);
}

.dialog-head {
  display: flex;
  flex: none;
  height: 47px;
  background: #e47e5c;
  color: #fdf1ec;
  font-size: 9px;
}

.head-left {
  display: flex;
  flex-direction: column;
  justify-content: space-between;
  width: 241px;
}

.head-left .quick {
  height: 26px;
}

.faint {
  margin-right: -5px;
}

.context {
  display: flex;
  flex-direction: column;
  justify-content: space-between;
  width: 194px;
  border-top: 3px solid #93493a;
  background: #b9644a;
}

.context-name {
  height: 24px;
  border-bottom: 1px solid #dda08c;
  line-height: 23px;
  text-align: center;
}

.context .tab-row button:first-child {
  padding: 0 10px;
}

.head-right {
  display: flex;
  flex: 1;
  align-items: flex-start;
  justify-content: space-between;
  min-width: 0;
  padding: 0 2px 0 4px;
  white-space: nowrap;
}

.head-right h2 {
  line-height: 25px;
}

.part {
  margin: 7px 4px 3px;
  padding: 5px 7px 11px;
  border: 1px solid #d0d0d0;
}

.part legend {
  display: flex;
  align-items: center;
  gap: 8px;
  margin-left: 1px;
  padding: 0 6px 0 4px;
  font-weight: 700;
}

.fields {
  display: flex;
  align-items: flex-end;
  gap: 5px;
}

.field {
  display: flex;
  flex-direction: column;
  gap: 4px;
}

.field.grow {
  flex: 1;
}

.w75 {
  width: 75px;
}

.w120 {
  width: 120px;
}

.lookup {
  display: flex;
  height: 18px;
  border: 1px solid #c0c0c0;
}

.lookup input {
  flex: 1;
  min-width: 0;
  padding-left: 1px;
}

.lookup button {
  width: 14px;
  border-left: 1px solid #c0c0c0;
  line-height: 12px;
}

.variant {
  width: 99px;
  height: 19px;
  border: 1px solid #d4d4d4;
  color: #a0a0a0;
}

.panes {
  display: flex;
  flex: 1;
  min-height: 0;
  padding: 0 4px 0 3px;
}

.tree {
  width: 275px;
  padding-left: 1px;
  border: 1px solid #c8c8c8;
  background: #fff;
  overflow: hidden;
}

.node {
  display: flex;
  align-items: center;
  height: 16px;
}

.guide {
  position: relative;
  display: flex;
  flex: none;
  align-items: center;
  justify-content: center;
  width: 16px;
  height: 16px;
}

.guide.elbow::before {
  position: absolute;
  top: 0;
  left: 8px;
  width: 7px;
  height: 8px;
  border: dotted #d0d0d0;
  border-width: 0 0 1px 1px;
  content: "";
}

.guide.through::after {
  position: absolute;
  top: 0;
  left: 8px;
  height: 16px;
  border-left: 1px dotted #d0d0d0;
  content: "";
}

.guide .tri {
  position: relative;
  z-index: 1;
}

.node-text {
  flex: 1;
  padding-left: 2px;
  line-height: 16px;
  white-space: pre;
}

.node-text.selected {
  background: #c0c0c0;
}

.tabs {
  display: flex;
  flex: 1;
  flex-direction: column;
  min-width: 0;
}

.tab-line {
  display: flex;
  gap: 2px;
  height: 22px;
  padding: 0 5px 0 2px;
}

.tab-line + .tab-line {
  height: 21px;
  padding-left: 0;
}

.tab-line button {
  border: 1px solid #cfcfcf;
  border-bottom: 0;
  background: #e8e8e8;
  white-space: nowrap;
}

.tab-line .active {
  position: relative;
  height: 22px;
  background: #f2f2f2;
}

.t92 {
  width: 92px;
}

.t123 {
  width: 123px;
}

.t135 {
  width: 135px;
}

.t137 {
  width: 137px;
}

.t164 {
  width: 164px;
}

.tab-page {
  display: flex;
  flex: 1;
  flex-direction: column;
  min-height: 0;
  padding: 10px 11px 11px 10px;
  border: 1px solid #cfcfcf;
}

.toolbar {
  display: flex;
  flex: none;
  align-items: center;
  gap: 4px;
  height: 21px;
  padding-left: 2px;
  border: solid #c0c0c0;
  border-width: 1px 0 0 1px;
}

.toolbar button {
  display: flex;
}

.toolbar .caret {
  width: 6px;
}

.sep {
  width: 1px;
  height: 18px;
  background: #d5d5d5;
}

.link-area {
  display: flex;
  flex: 1;
  min-height: 0;
}

.link-left {
  display: flex;
  flex: 1;
  flex-direction: column;
  gap: 4px;
  min-width: 0;
  padding-top: 3px;
}

.link-left .filters {
  margin-right: 12px;
  border-width: 1px 0;
}

.link-box {
  display: flex;
  flex: 1;
  flex-direction: column;
  min-height: 0;
  border: solid #bbb;
  border-width: 1px 1px 1px 0;
}

.link-scroll {
  display: flex;
  flex: 1;
  min-height: 0;
}

.link-clip {
  flex: 1;
  min-width: 0;
  overflow: hidden;
}

.link-grid {
  width: 100%;
}

.link-grid th {
  height: 56px;
}

.link-grid td {
  height: 17px;
}

.status {
  display: flex;
  flex: none;
  height: 19px;
  margin-top: 1px;
  border: 1px solid #ccc;
}

.status span {
  display: flex;
  align-items: center;
  gap: 2px;
  padding-left: 4px;
  border-right: 1px solid #ccc;
  overflow: hidden;
  white-space: nowrap;
}

.status span:last-child {
  border-right: 0;
}

.s80 {
  width: 80px;
}

.s29 {
  width: 29px;
}

.s101 {
  width: 101px;
}

.s64 {
  width: 64px;
}

.s70 {
  width: 70px;
}

.s11 {
  width: 11px;
}

.dialog-foot {
  display: flex;
  flex: none;
  align-items: center;
  height: 30px;
  padding: 3px 4px 0 0;
}

.dialog-foot span {
  padding: 2px 8px;
  border-right: 1px solid #ccc;
}

.dialog-foot span:first-child {
  padding: 2px 6px 2px 5px;
}

.dialog-foot span:nth-of-type(4) {
  border: 0;
}

.dialog-foot button {
  width: 57px;
  height: 20px;
  margin-left: auto;
  border: 1px solid #bbb;
}
</style>
